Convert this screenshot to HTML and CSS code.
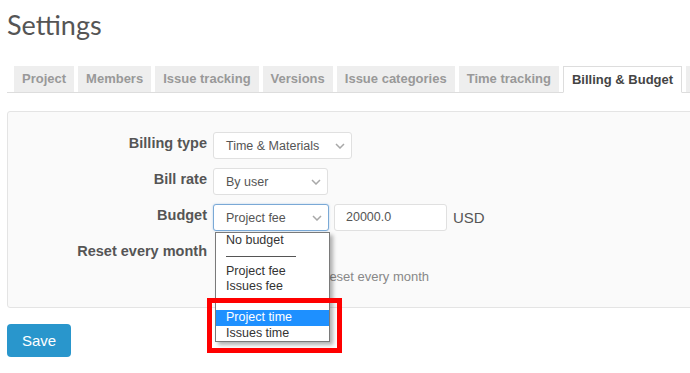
FILE: index.html
```html
<!DOCTYPE html>
<html>
<head>
<meta charset="utf-8">
<link rel="stylesheet" href="styles.css">
</head>
<body>
<div class="page">
  <h1 class="title">Settings</h1>
  <ul class="tabs">
    <li class="tab">Project</li>
    <li class="tab">Members</li>
    <li class="tab">Issue tracking</li>
    <li class="tab">Versions</li>
    <li class="tab">Issue categories</li>
    <li class="tab">Time tracking</li>
    <li class="tab active">Billing &amp; Budget</li>
    <li class="tab more"></li>
  </ul>
  <div class="panel">
    <div class="form">
      <label class="lbl">Billing type</label>
      <div class="ctrl">
        <div class="select w-type"><span>Time &amp; Materials</span><svg class="chev" width="10" height="6" viewBox="0 0 10 6"><polyline points="1,1 5,5 9,1" fill="none" stroke="#a8a8a8" stroke-width="1.5"/></svg></div>
      </div>
      <label class="lbl">Bill rate</label>
      <div class="ctrl">
        <div class="select w-rate"><span>By user</span><svg class="chev" width="10" height="6" viewBox="0 0 10 6"><polyline points="1,1 5,5 9,1" fill="none" stroke="#a8a8a8" stroke-width="1.5"/></svg></div>
      </div>
      <label class="lbl">Budget</label>
      <div class="ctrl">
        <div class="select-wrap">
          <div class="select focus w-budget"><span>Project fee</span><svg class="chev" width="10" height="6" viewBox="0 0 10 6"><polyline points="1,1 5,5 9,1" fill="none" stroke="#a8a8a8" stroke-width="1.5"/></svg></div>
          <div class="listbox">
            <div class="opt">No budget</div>
            <div class="opt"><div class="sep"></div></div>
            <div class="opt">Project fee</div>
            <div class="opt">Issues fee</div>
            <div class="opt"></div>
            <div class="opt selected">Project time</div>
            <div class="opt">Issues time</div>
          </div>
          <div class="annot"></div>
        </div>
        <div class="input">20000.0</div>
        <span class="unit">USD</span>
      </div>
      <label class="lbl">Reset every month</label>
      <div class="ctrl"></div>
      <div></div>
      <div class="ctrl hint">Reset every month</div>
    </div>
  </div>
  <button class="save">Save</button>
</div>
</body>
</html>
```
FILE: styles.css
```css
html, body {
  margin: 0;
  padding: 0;
  overflow: hidden;
  background: #fff;
}
.page {
  width: 780px;
  padding: 9px 0 0 7px;
  font-family: "Liberation Sans", Arial, sans-serif;
  color: #555;
}
.title {
  margin: 0;
  font-family: Lato, "Open Sans", sans-serif;
  font-weight: 400;
  font-size: 27px;
  line-height: 32px;
  color: #555;
}
.tabs {
  list-style: none;
  margin: 25px 0 0 0;
  padding: 0 0 0 7px;
  display: flex;
  align-items: flex-end;
  gap: 4px;
  height: 26px;
  border-bottom: 1px solid #ddd;
}
.tab {
  box-sizing: border-box;
  height: 26px;
  line-height: 26px;
  padding: 0 8px;
  background: #eee;
  color: #999;
  font-weight: bold;
  font-size: 13px;
  white-space: nowrap;
}
.tab.more {
  width: 60px;
}
.tab.active {
  height: 27px;
  line-height: 25px;
  margin-bottom: -1px;
  padding: 0 8px;
  background: #fff;
  color: #444;
  border: 1px solid #ddd;
  border-bottom-color: #fff;
}
.panel {
  margin-top: 18px;
  background: #fafafa;
  border: 1px solid #e4e4e4;
  border-radius: 3px;
  padding: 20px 0 22px 0;
}
.form {
  display: grid;
  grid-template-columns: 199px auto;
  column-gap: 6px;
  row-gap: 9px;
}
.lbl {
  text-align: right;
  font-weight: bold;
  font-size: 14.5px;
  line-height: 17px;
  padding-top: 3px;
  color: #555;
  white-space: nowrap;
}
.ctrl {
  display: flex;
  align-items: center;
}
.select {
  box-sizing: border-box;
  height: 27px;
  background: #fff;
  border: 1px solid #e0e0e0;
  border-radius: 3px;
  display: flex;
  align-items: center;
  justify-content: space-between;
  padding: 0 6px 0 12px;
  font-size: 12.5px;
  color: #555;
}
.select.focus {
  border-color: #7aa9d6;
  box-shadow: 0 0 2px rgba(102, 160, 220, 0.5);
}
.w-type { width: 139px; }
.w-rate { width: 115px; }
.w-budget { width: 116px; }
.chev { display: block; }
.select-wrap {
  position: relative;
}
.listbox {
  position: absolute;
  left: 2px;
  top: 28px;
  box-sizing: border-box;
  width: 115px;
  height: 110px;
  background: #fff;
  border: 1px solid #7a7a7a;
  box-shadow: 3px 3px 4px rgba(0, 0, 0, 0.3);
  z-index: 5;
}
.opt {
  height: 15.43px;
  line-height: 15.43px;
  padding-left: 10px;
  font-size: 12.5px;
  color: #333;
  white-space: nowrap;
}
.opt.selected {
  background: #1e90ff;
  color: #fff;
}
.sep {
  width: 70px;
  height: 8px;
  border-bottom: 1px solid #555;
}
.annot {
  position: absolute;
  left: -6px;
  top: 94px;
  width: 135px;
  height: 55px;
  box-sizing: border-box;
  border: 5px solid #f00;
  z-index: 6;
}
.input {
  box-sizing: border-box;
  margin-left: 5px;
  width: 113px;
  height: 27px;
  background: #fff;
  border: 1px solid #e0e0e0;
  border-radius: 3px;
  padding-left: 11px;
  line-height: 25px;
  font-size: 12.5px;
  color: #555;
}
.unit {
  margin-left: 6px;
  font-size: 15px;
  color: #555;
}
.hint {
  padding-left: 107px;
  font-size: 13px;
  line-height: 16px;
  color: #888;
  white-space: nowrap;
}
.save {
  display: block;
  margin-top: 16px;
  width: 64px;
  height: 33px;
  border: none;
  border-radius: 4px;
  background: #2996cc;
  color: #fff;
  font-family: "Liberation Sans", Arial, sans-serif;
  font-size: 15px;
  padding: 0;
}
```
